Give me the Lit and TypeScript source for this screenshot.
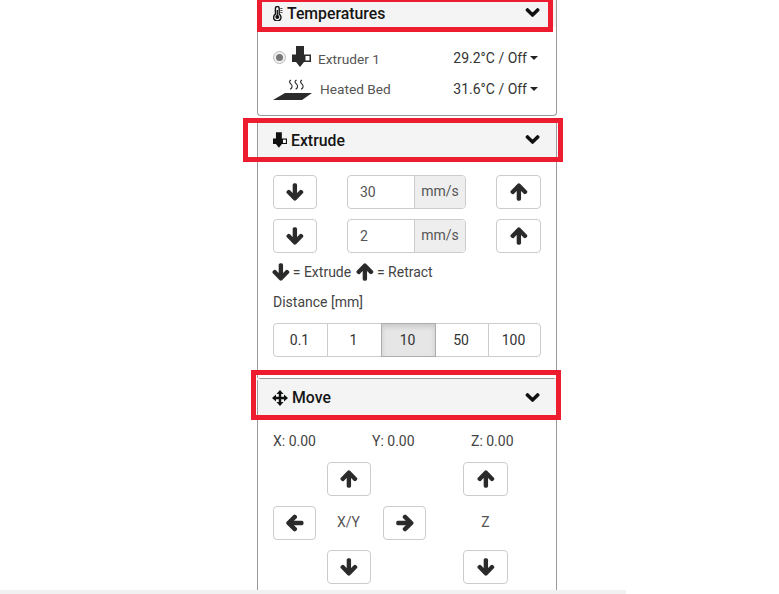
import { LitElement, html, css, svg } from "lit";
import { customElement } from "lit/decorators.js";

const P: Record<string, [number, string]> = {
  up: [448, "M34.9 289.5l-22.2-22.2c-9.4-9.4-9.4-24.6 0-33.9L207 39c9.4-9.4 24.6-9.4 33.9 0l194.3 194.3c9.4 9.4 9.4 24.6 0 33.9L413 289.4c-9.5 9.5-25 9.3-34.3-.4L264 168.6V456c0 13.3-10.7 24-24 24h-32c-13.3 0-24-10.7-24-24V168.6L69.2 289.1c-9.3 9.8-24.8 10-34.3.4z"],
  down: [448, "M413.1 222.5l22.2 22.2c9.4 9.4 9.4 24.6 0 33.9L241 473c-9.4 9.4-24.6 9.4-33.9 0L12.7 278.6c-9.4-9.4-9.4-24.6 0-33.9l22.2-22.2c9.5-9.5 25-9.3 34.3.4L184 343.4V56c0-13.3 10.7-24 24-24h32c13.3 0 24 10.7 24 24v287.4l114.8-120.5c9.3-9.8 24.8-10 34.3-.4z"],
  left: [448, "M257.5 445.1l-22.2 22.2c-9.4 9.4-24.6 9.4-33.9 0L7 273c-9.4-9.4-9.4-24.6 0-33.9L201.4 44.7c9.4-9.4 24.6-9.4 33.9 0l22.2 22.2c9.5 9.5 9.3 25-.4 34.3L136.6 216H424c13.3 0 24 10.7 24 24v32c0 13.3-10.7 24-24 24H136.6l120.5 114.8c9.8 9.3 10 24.8.4 34.3z"],
  right: [448, "M190.5 66.9l22.2-22.2c9.4-9.4 24.6-9.4 33.9 0L441 239c9.4 9.4 9.4 24.6 0 33.9L246.6 467.3c-9.4 9.4-24.6 9.4-33.9 0l-22.2-22.2c-9.5-9.5-9.3-25 .4-34.3L311.4 296H24c-13.3 0-24-10.7-24-24v-32c0-13.3 10.7-24 24-24h287.4L190.9 101.2c-9.8-9.3-10-24.8-.4-34.3z"],
  chevron: [448, "M207.029 381.476L12.686 187.132c-9.373-9.373-9.373-24.569 0-33.941l22.667-22.667c9.357-9.357 24.522-9.375 33.901-.04L224 284.505l154.745-154.021c9.379-9.335 24.544-9.317 33.901.04l22.667 22.667c9.373 9.373 9.373 24.569 0 33.941L240.971 381.476c-9.373 9.372-24.569 9.372-33.942 0z"],
};

const fa = (n: string, size = 18, sw = 45) => html`<svg class="fa" width=${(size * P[n][0]) / 512} height=${size} viewBox="0 0 ${P[n][0]} 512" fill="currentColor" stroke="currentColor" stroke-width=${sw} overflow="visible"><path d=${P[n][1]}></path></svg>`;

const extruder = (w = 19, h = 21) => html`<svg class="fa ext" width=${w} height=${h} viewBox="0 0 19 21">
  <path fill="currentColor" d="M4 0h8v8.500h7v7.500h-7l-4 5-4-5H0V8.500h4z"></path>
  ${svg`<rect x="13.500" y="10" width="4" height="4.500" fill="#fff"></rect>`}
</svg>`;

const thermo = html`<svg class="fa" width="10" height="15" viewBox="0 0 10 15" fill="none" stroke="currentColor">
  <path stroke-width="1.400" d="M2.400 8.200V2.400a1.900 1.900 0 0 1 3.800 0v5.800a3.700 3.700 0 1 1-3.800 0z"></path>
  <circle cx="4.300" cy="11" r="2" fill="currentColor" stroke="none"></circle>
  <path stroke-width="1.300" d="M4.300 4v7"></path>
  <path stroke-width=".7" d="M7.200 2.500h2.300M7.200 4.500h2.300M7.200 6.500h2.300"></path>
</svg>`;

const bed = html`<svg class="fa bed" width="40" height="24" viewBox="0 0 40 24">
  <path fill="#2b2b2b" d="M12 16h27L29 23H0z"></path>
  <path fill="none" stroke="#2b2b2b" stroke-width="1.100" d="M18 3c-2 1.200-2 2.300 0 4.200s1 3.900-.8 5M23.500 3c-2 1.200-2 2.300 0 4.200s1 3.900-.8 5M29 3c-2 1.200-2 2.300 0 4.200s1 3.900-.8 5"></path>
</svg>`;

const moveIcon = html`<svg class="fa mv" width="16" height="16" viewBox="0 0 16 16" fill="#111">
  <path d="M8 0l3.500 4H9.200v2.800H12V4.500L16 8l-4 3.500V9.200H9.200V12h2.300L8 16l-3.500-4h2.300V9.200H4v2.300L0 8l4-3.500v2.300h2.800V4H4.500z"></path>
</svg>`;

@customElement("app-root")
export class AppRoot extends LitElement {
  static styles = css`
    :host { display: block; position: relative; height: 594px; overflow: hidden; background: #fff; font-family: Roboto, "Liberation Sans", sans-serif; font-size: 14px; color: #3a3a3a; }
    .fa { display: block; flex: none; }
    .column { width: 300px; margin-left: 257px; height: 590px; overflow: hidden; box-sizing: border-box; display: flex; flex-direction: column; }
    .panel { border: 1px solid #9a9a9a; border-top: 0; background: #fff; flex: none; }
    .temp { height: 116px; border-radius: 0 0 4px 4px; box-sizing: border-box; margin-bottom: 7px; }
    .extrude { height: 255px; box-sizing: border-box; border-bottom: 0; }
    .move { flex: 1; border-top: 1px solid #9a9a9a; border-radius: 4px 4px 0 0; border-bottom: 0; }
    .head { display: flex; align-items: center; background: #f4f4f4; font-size: 15.800px; font-weight: 500; color: #151515; padding: 0 17px 0 14px; }
    .head .chev { margin-left: auto; margin-top: -2px; color: #111; }
    .temp .head { height: 26px; padding-bottom: 1px; gap: 4px; padding-left: 15px; }
    .extrude .head { height: 34px; gap: 4px; padding-left: 15px; }
    .move .head { height: 37px; gap: 4px; }
    .move .head .chev { margin-top: 0; }
    .mv { margin-top: 1px; }
    .t-body { padding: 0 15px; display: flex; flex-direction: column; }
    .t-row { display: flex; align-items: center; height: 30px; }
    .t-row:first-child { margin-top: 17px; }
    .radio { width: 13px; height: 13px; box-sizing: border-box; border: 1px solid #bbb; border-radius: 50%; background: #f0f0f0; display: flex; align-items: center; justify-content: center; margin: -4px 6px 0 0; }
    .radio i { width: 7px; height: 7px; border-radius: 50%; background: #777; }
    .ext { color: #2b2b2b; }
    .t-row .ext { margin-top: -5px; }
    .extrude .head .ext { color: #111; }
    .t-label { color: #555; font-size: 13.700px; margin-left: 7px; }
    .t-val { margin-left: auto; display: flex; align-items: center; gap: 3px; margin-right: 3px; margin-top: -2px; color: #333; }
    .bed ~ .t-val { margin-top: -1px; }
    .caret { width: 0; height: 0; border: 4px solid transparent; border-top-color: #222; border-bottom: 0; }
    .e-body { padding: 18px 15px 0; }
    .e-row { display: flex; justify-content: space-between; align-items: center; height: 34px; margin-bottom: 10px; }
    .btn { box-sizing: border-box; width: 44px; height: 34px; border: 1px solid #ccc; border-radius: 4px; background: #fff; color: #2b2b2b; display: flex; align-items: center; justify-content: center; padding: 0; }
    .e-row .btn:last-child { width: 45px; }
    .igroup { display: flex; width: 119px; height: 34px; box-sizing: border-box; border: 1px solid #ccc; border-radius: 4px; overflow: hidden; }
    .igroup span { flex: 1; padding-left: 12px; line-height: 32px; color: #555; }
    .igroup b { box-sizing: border-box; width: 51px; font-weight: 400; background: #eee; border-left: 1px solid #ccc; text-align: center; line-height: 30px; color: #555; }
    .legend { display: flex; align-items: center; gap: 4px; height: 20px; color: #444; margin-top: -1px; }
    .legend .fa { color: #2b2b2b; }
    .legend span { margin-right: 2px; }
    .dist { margin-top: 10px; height: 20px; line-height: 20px; color: #444; }
    .group { display: flex; margin-top: 11px; width: 268px; }
    .group button { flex: none; width: 55px; height: 34px; box-sizing: border-box; border: 1px solid #ccc; margin-left: -1px; background: #fff; font: inherit; color: #333; padding: 0 2px 0 0; }
    .group button:first-child { margin-left: 0; border-radius: 4px 0 0 4px; }
    .group button:nth-child(4) { width: 54px; }
    .group button:last-child { width: 53px; border-radius: 0 4px 4px 0; }
    .group button.on { background: #e6e6e6; border-color: #adadad; box-shadow: inset 0 3px 5px rgba(0,0,0,.125); position: relative; }
    .m-body { padding: 15px 15px 0; }
    .pos { display: grid; grid-template-columns: 99px 99px 1fr; height: 20px; line-height: 20px; color: #444; }
    .pad { display: grid; grid-template-columns: 43px 11px 44px 12px 43px 37px 45px 1fr; grid-template-rows: 34px 34px 34px; row-gap: 10px; margin-top: 11px; width: 268px; }
    .pad .c { display: flex; align-items: center; justify-content: center; color: #555; padding-bottom: 2px; }
    .pad .xy { grid-column: 2 / 5; grid-row: 2; padding-right: 2px; }
    .pad .z { grid-column: 7; grid-row: 2; }
    .pad .btn { width: auto; }
    .scroll { position: absolute; left: 0; bottom: 0; width: 626px; height: 4px; background: #f1f1f1; }
    .mark { position: absolute; box-sizing: border-box; border: 5px solid #ed1c2e; pointer-events: none; }
    .m1 { left: 257px; top: -3px; width: 296px; height: 35px; }
    .m2 { left: 243px; top: 118px; width: 320px; height: 44px; }
    .m3 { left: 251px; top: 370px; width: 310px; height: 50px; }
  `;

  render() {
    return html`
      <div class="column">
        <section class="panel temp">
          <div class="head">${thermo}<span>Temperatures</span><span class="chev">${fa("chevron", 15, 40)}</span></div>
          <div class="t-body">
            <div class="t-row"><span class="radio"><i></i></span>${extruder()}<span class="t-label">Extruder 1</span><span class="t-val">29.2°C / Off<span class="caret"></span></span></div>
            <div class="t-row">${bed}<span class="t-label">Heated Bed</span><span class="t-val">31.6°C / Off<span class="caret"></span></span></div>
          </div>
        </section>
        <section class="panel extrude">
          <div class="head">${extruder(14, 16)}<span>Extrude</span><span class="chev">${fa("chevron", 15, 40)}</span></div>
          <div class="e-body">
            <div class="e-row"><button class="btn">${fa("down")}</button><div class="igroup"><span>30</span><b>mm/s</b></div><button class="btn">${fa("up")}</button></div>
            <div class="e-row"><button class="btn">${fa("down")}</button><div class="igroup"><span>2</span><b>mm/s</b></div><button class="btn">${fa("up")}</button></div>
            <div class="legend">${fa("down")}<span>= Extrude</span>${fa("up")}<span>= Retract</span></div>
            <div class="dist">Distance [mm]</div>
            <div class="group"><button>0.1</button><button>1</button><button class="on">10</button><button>50</button><button>100</button></div>
          </div>
        </section>
        <section class="panel move">
          <div class="head">${moveIcon}<span>Move</span><span class="chev">${fa("chevron", 15, 40)}</span></div>
          <div class="m-body">
            <div class="pos"><span>X: 0.00</span><span>Y: 0.00</span><span>Z: 0.00</span></div>
            <div class="pad">
              <button class="btn" style="grid-column:3;grid-row:1">${fa("up")}</button>
              <button class="btn" style="grid-column:7;grid-row:1">${fa("up")}</button>
              <button class="btn" style="grid-column:1;grid-row:2">${fa("left")}</button>
              <div class="c xy">X/Y</div>
              <button class="btn" style="grid-column:5;grid-row:2">${fa("right")}</button>
              <div class="c z">Z</div>
              <button class="btn" style="grid-column:3;grid-row:3">${fa("down")}</button>
              <button class="btn" style="grid-column:7;grid-row:3">${fa("down")}</button>
            </div>
          </div>
        </section>
      </div>
      <div class="scroll"></div>
      <div class="mark m1"></div>
      <div class="mark m2"></div>
      <div class="mark m3"></div>
    `;
  }
}
